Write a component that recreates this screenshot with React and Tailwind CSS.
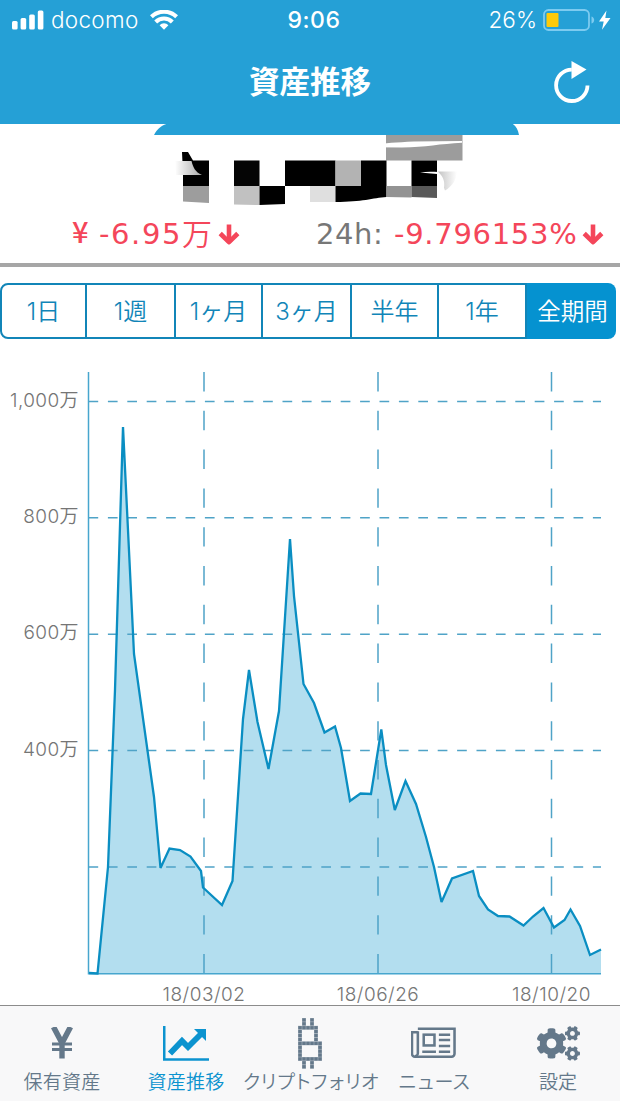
import React from 'react';
import { FaCogs } from 'react-icons/fa';

const JP = "font-['Inter','Noto_Sans_CJK_JP',sans-serif]";

const periods = [
  { label: '1日', width: 'w-[87px] rounded-l-lg border-l-2' },
  { label: '1週', width: 'w-[89px]' },
  { label: '1ヶ月', width: 'w-[87px]' },
  { label: '3ヶ月', width: 'w-[89px]' },
  { label: '半年', width: 'w-[87px]' },
  { label: '1年', width: 'w-[88px] border-r-0' },
];

const yTicks = [
  { y: 401.5, label: '1,000万' },
  { y: 517.7, label: '800万' },
  { y: 634.3, label: '600万' },
  { y: 750.6, label: '400万' },
  { y: 867, label: '' },
];

const xTicks = [
  { x: 204, label: '18/03/02' },
  { x: 378, label: '18/06/26' },
  { x: 551.5, label: '18/10/20' },
];

const line =
  '89,973 97.5,973.5 108,867 115,690 123,427 134,654 154,797 160.5,868 169.5,848.5 180,850 190.5,856.5 201,871 203,887.5 222,905 232.5,881 243,719 249,670 257.5,722 268.5,769 279,711 290,539 294,596 303.5,684 314,703 324.5,732.5 335,726.5 341,748 350,801 360.5,793.5 371,794 381.3,729.5 386,765 394.8,810 405.5,781 416,804 426,837 434,867 441.5,902 452,878.5 473,871 479,896 488,909.5 498,916 509.5,916.5 523.5,925.5 533,916.5 543.5,908 554,927.5 564.5,920 570.5,909.5 580,926 590,955 601,949.5';

function SignalIcon() {
  return (
    <svg className="h-5 w-8" viewBox="0 0 32 20" fill="white">
      <rect x="0" y="11" width="5.6" height="8.5" rx="1.5" />
      <rect x="8.6" y="8" width="5.6" height="11.5" rx="1.5" />
      <rect x="17.2" y="4.5" width="5.6" height="15" rx="1.5" />
      <rect x="25.8" y="0.5" width="5.6" height="19" rx="1.5" />
    </svg>
  );
}

function WifiIcon() {
  return (
    <svg className="-ml-px h-5 w-7" viewBox="0 0 28 20" fill="none" stroke="white" strokeWidth="4">
      <path d="M1.4 6.800a18 18 0 0 1 25.200 0" />
      <path d="M5.7 12a11.5 11.5 0 0 1 16.600 0" />
      <path d="M14 19.8l-4.400-4.6a6.2 6.2 0 0 1 8.800 0z" fill="white" stroke="none" />
    </svg>
  );
}

function BatteryIcon() {
  return (
    <svg className="h-6 w-[70px]" viewBox="0 0 70 24">
      <rect x="1" y="2" width="45" height="20" rx="4.5" fill="none" stroke="#7dcbf0" strokeWidth="1.8" />
      <path d="M48.5 8.5c3.6 1 3.6 6 0 7z" fill="#7dcbf0" />
      <rect x="3.5" y="5" width="12" height="14" rx="1" fill="#fdca08" />
      <path d="M63.5 2.5l-7.5 11h4.7l-1.7 8.2 8.5-11.6h-5.2z" fill="white" />
    </svg>
  );
}

function ReloadIcon() {
  return (
    <svg className="h-11 w-9" viewBox="0 0 36 44" fill="none">
      <path d="M33.5 25.5a15.7 15.7 0 1 1-15.7-15.9" stroke="white" strokeWidth="3.8" />
      <path d="M17.5 1v18L32.5 9.5z" fill="white" />
    </svg>
  );
}

function DownArrow() {
  return (
    <svg className="h-[22px] w-[22px] shrink-0" viewBox="0 0 22 22" fill="none" stroke="#f4465a" strokeWidth="4.6">
      <path d="M11 0.5v18" />
      <path d="M2.200 9.500l8.800 8.700 8.800-8.700" strokeLinejoin="round" />
    </svg>
  );
}

// balance is hidden behind a pixelated patch
function HiddenBalance() {
  return (
    <svg className="block h-[91px] w-full" viewBox="0 124 620 91">
      <defs>
        <linearGradient id="smearLeft">
          <stop offset="0" stopColor="white" />
          <stop offset="1" stopColor="#a8a8a8" />
        </linearGradient>
        <linearGradient id="smearRight">
          <stop offset="0" stopColor="#c4c4c4" />
          <stop offset="1" stopColor="white" />
        </linearGradient>
      </defs>
      <path d="M154 135c3-6 7-9.5 14-11.5h344c4 2 6 6 7 11.5z" fill="#25a0d6" />
      <rect x="386" y="135" width="76.5" height="25.5" fill="#9c9c9c" />
      <path d="M336 147c34-1 42-4 78-5.5l48-.5v1.8c-22 1-36 4.5-60 4.7z" fill="white" />
      <path d="M182 152h6l5 8.5h16V186.5H183V174z" fill="black" />
      <path d="M175 161H191.5C193 167 195 172 202 175H176z" fill="url(#smearLeft)" />
      <path d="M183 186h26V203l-26-1.5z" fill="#9d9d9d" />
      <rect x="234" y="160.5" width="25.5" height="25.5" fill="#050505" />
      <path d="M234 186h25.5v19l-25.5-.5z" fill="#c1c1c1" />
      <path d="M259.5 186h25.5v18l-25.5 1z" fill="black" />
      <rect x="285" y="160.5" width="50.5" height="25.5" fill="black" />
      <rect x="310" y="186" width="25.5" height="16" fill="#dfdfdf" />
      <rect x="335.5" y="160.5" width="25.5" height="25.5" fill="#b3b3b3" />
      <path d="M361 160.5h25.5V197c-14 1-24 5-51 5V186H361z" fill="black" />
      <path d="M386.5 186h25v11.5l-25-.5z" fill="#939393" />
      <rect x="411.5" y="160.5" width="25.5" height="25.5" fill="black" />
      <path d="M411.5 186H437v12l-25.5-1z" fill="#595959" />
      <path d="M438 171.5h19c-1 9-5 15-12 19z" fill="url(#smearRight)" />
      <path d="M420 172.500c6-1 12-1 18-.5 5 4 7 9 6 16-1 5-4 9-7 10V174z" fill="white" />
    </svg>
  );
}

function Chart() {
  return (
    <svg className="block h-[665px] w-full overflow-visible" viewBox="0 339 620 665">
      <polygon points={line + ' 601,973 89,973'} fill="#b3deef" />
      <g stroke="#4fa3c7" strokeWidth="1.5" fill="none">
        {yTicks.map((t) => (
          <path key={t.y} d={`M88.5 ${t.y}H601`} strokeDasharray="9.7 9.7" />
        ))}
        {xTicks.map((t) => (
          <path key={t.x} d={`M${t.x} 372V973`} strokeDasharray="19.4 19.4" />
        ))}
      </g>
      <path d="M88.5 372V973.7H601" fill="none" stroke="#47a6ce" strokeWidth="1.5" />
      <polyline points={line} fill="none" stroke="#0a8ec2" strokeWidth="2.3" strokeMiterlimit="3" />
      <g className={`${JP} font-[350]`} fill="#757575" fontSize="19">
        {yTicks.map((t) => (
          <text key={t.y} x="79" y={t.y + 5} textAnchor="end" letterSpacing="0.4">{t.label}</text>
        ))}
        {xTicks.map((t) => (
          <text key={t.x} x={t.x} y="1000.5" textAnchor="middle" letterSpacing="0.5">{t.label}</text>
        ))}
      </g>
    </svg>
  );
}

function YenIcon() {
  return (
    <svg className="h-8 w-6" viewBox="0 0 24 32" fill="none" stroke="#64788a">
      <path d="M3.5 0l8.5 16 8.5-16" strokeWidth="5.6" />
      <path d="M12 14v17.5" strokeWidth="5.4" />
      <path d="M2 17h20M2 22.5h20" strokeWidth="3.2" />
    </svg>
  );
}

function LineChartIcon() {
  return (
    <svg className="h-[35px] w-[46px]" viewBox="0 0 46 35">
      <path d="M1.2 0v33.5H46" fill="none" stroke="#0c93cf" strokeWidth="2.6" />
      <path d="M7 27.5l12-12.5 6 6L38 8" fill="none" stroke="#0c93cf" strokeWidth="5.8" />
      <path d="M31 3h12v12z" fill="#0c93cf" />
    </svg>
  );
}

const coinPixels = [
  '.#.#..',
  '.#.#..',
  '#####.',
  '#...#.',
  '#...#.',
  '#...#.',
  '######',
  '#....#',
  '#....#',
  '#....#',
  '######',
  '.#.#..',
  '.#.#..',
];

function CoinIcon() {
  return (
    <svg className="h-[51px] w-6" viewBox="0 0 24 51">
      {coinPixels.map((row, y) =>
        row.split('').map((c, x) =>
          c === '#' ? (
            <g key={`${x}-${y}`}>
              <rect x={x * 4} y={y * 3.9} width="4" height="3.9" fill="#a9b4be" />
              <rect x={x * 4 + 0.3} y={y * 3.9 + 0.3} width="3.4" height="3.3" fill="#64788a" />
            </g>
          ) : null
        )
      )}
    </svg>
  );
}

function NewsIcon() {
  return (
    <svg className="mr-0.5 h-8 w-[45px]" viewBox="0 0 46 32" fill="none" stroke="#64788a" strokeWidth="2.6">
      <path d="M7 1.5h37.5V27a3 3 0 0 1-3 3H4a3 3 0 0 1-3-3V5h6" />
      <path d="M7 4v22.5a3 3 0 0 1-3 3" />
      <rect x="13" y="7.5" width="11" height="11" />
      <path d="M28.5 7.5H40M28.5 13H40M28.5 19H40M11.5 25H25.5M28.5 25H40" />
    </svg>
  );
}

const tabs = [
  { label: '保有資産', icon: <YenIcon />, color: 'text-[#64788a]', spacing: 'tracking-[0.2px]' },
  { label: '資産推移', icon: <LineChartIcon />, color: 'text-[#0c93cf]', spacing: 'tracking-[0.2px]' },
  { label: 'クリプトフォリオ', icon: <CoinIcon />, color: 'text-[#64788a]', spacing: 'tracking-[-2.1px]' },
  { label: 'ニュース', icon: <NewsIcon />, color: 'text-[#64788a]', spacing: 'tracking-[-0.8px]' },
  { label: '設定', icon: <FaCogs className="h-[43px] w-[43px]" />, color: 'text-[#64788a]', spacing: 'tracking-normal' },
];

export default function App() {
  return (
    <div className={`flex h-[1101px] w-[620px] flex-col overflow-hidden bg-white ${JP}`}>
      <header className="h-[124px] shrink-0 bg-[#25a0d6] text-white">
        <div className="grid h-10 grid-cols-3 items-center pl-3">
          <div className="flex items-center">
            <SignalIcon />
            <span className="ml-[7px] mr-3 text-[22.5px] font-[350] tracking-[0.3px]">docomo</span>
            <WifiIcon />
          </div>
          <div className="pr-1 text-center text-[23px] font-medium tracking-[0.6px]">9:06</div>
          <div className="flex items-center justify-end gap-1.5 pr-[7px]">
            <span className="text-[22.5px] font-[350]">26%</span>
            <BatteryIcon />
          </div>
        </div>
        <div className="grid h-[84px] grid-cols-[1fr_auto_1fr] items-center">
          <span />
          <h1 className="text-[30.5px] font-bold">資産推移</h1>
          <div className="flex justify-end pr-[30px]">
            <ReloadIcon />
          </div>
        </div>
      </header>

      <section className="h-[143px] shrink-0 border-b-4 border-[#a6a6a6]">
        <HiddenBalance />
        <div className="flex h-[39px] items-center pl-[72px] font-['DejaVu_Sans','Noto_Sans_CJK_JP',sans-serif] text-[29px] text-[#f4465a]">
          <span className="w-[27px] pb-[7px] font-['Noto_Sans_CJK_JP',sans-serif] text-[29px] font-medium">¥</span>
          <span className="flex w-[119px] items-center whitespace-nowrap">
            <span className="tracking-[1.6px]">-6.95</span>
            <span className="text-[30px] font-[350]">万</span>
          </span>
          <DownArrow />
          <span className="ml-[76px] w-[78px] tracking-[0.6px] text-[#777777]">24h:</span>
          <span className="w-[188px] tracking-[0.7px]">-9.796153%</span>
          <DownArrow />
        </div>
      </section>

      <div className="mt-4 flex h-14 w-[616px] shrink-0 text-[24px] font-[350] text-[#1185b8]">
        {periods.map((p) => (
          <div key={p.label} className={`flex shrink-0 items-center justify-center border-y-2 border-r-2 border-[#1185b8] pt-0.5 ${p.width}`}>
            {p.label}
          </div>
        ))}
        <div className="flex flex-1 items-center justify-center whitespace-nowrap rounded-r-lg bg-[#0592d0] pl-0.5 pt-0.5 text-[23.5px] text-white">全期間</div>
      </div>

      <div className="h-[666px] shrink-0">
        <Chart />
      </div>

      <nav className="grid h-24 shrink-0 grid-cols-5 border-t border-[#8c8c8c] bg-[#f8f8f9] text-[19px] font-[350]">
        {tabs.map((t) => (
          <div key={t.label} className={`flex flex-col items-center ${t.color}`}>
            <div className="flex h-[62px] items-center justify-center pt-3">{t.icon}</div>
            <span className={`whitespace-nowrap pt-px leading-7 ${t.spacing}`}>{t.label}</span>
          </div>
        ))}
      </nav>
    </div>
  );
}
